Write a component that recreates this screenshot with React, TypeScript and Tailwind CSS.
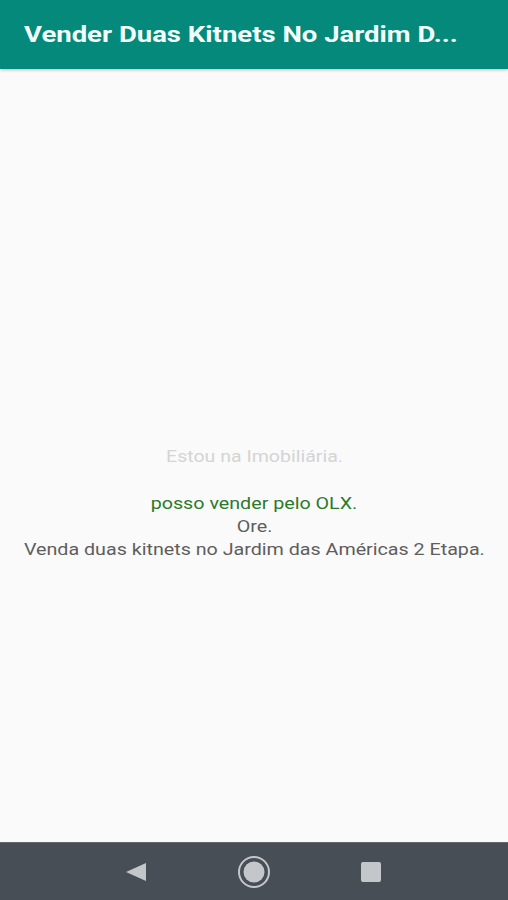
export default function App() {
  return (
    <div className="w-[508px] h-[900px] flex flex-col bg-[#fafafa] overflow-hidden" style={{ fontFamily: 'Roboto, "Noto Sans", sans-serif' }}>
      <div className="h-[69px] shrink-0 bg-[#04897a] flex items-center px-6 shadow-[0_1px_3px_rgba(0,0,0,0.25)]">
        <div className="text-[#f2fffd] text-[22px] font-bold whitespace-nowrap scale-x-[1.25] origin-left">Vender Duas Kitnets No Jardim D...</div>
      </div>
      <div className="flex-1 flex flex-col items-center pt-[376px] text-[16px] leading-[23px] text-center">
        <div className="text-[#d4d4d4] mb-[24px] scale-x-[1.22]">Estou na Imobiliária.</div>
        <div className="text-[#2a7a2a] scale-x-[1.23]">posso vender pelo OLX.</div>
        <div className="text-[#5e5e5e] scale-x-[1.23]">Ore.</div>
        <div className="text-[#5e5e5e] scale-x-[1.23] whitespace-nowrap">Venda duas kitnets no Jardim das Américas 2 Etapa.</div>
      </div>
      <div className="h-[58px] shrink-0 bg-[#474e56] flex items-center justify-center gap-[88px] border-t border-[#666]">
        <svg width="24" height="24" viewBox="0 0 24 24"><path d="M21 3 L21 21 L1 12 Z" fill="#c4c7ca" /></svg>
        <svg width="34" height="34" viewBox="0 0 34 34"><circle cx="17" cy="17" r="15" fill="none" stroke="#c4c7ca" strokeWidth="2" /><circle cx="17" cy="17" r="10.5" fill="#c4c7ca" /></svg>
        <svg width="24" height="24" viewBox="0 0 24 24"><rect x="2" y="2" width="20" height="20" rx="2" fill="#c4c7ca" /></svg>
      </div>
    </div>
  );
}
